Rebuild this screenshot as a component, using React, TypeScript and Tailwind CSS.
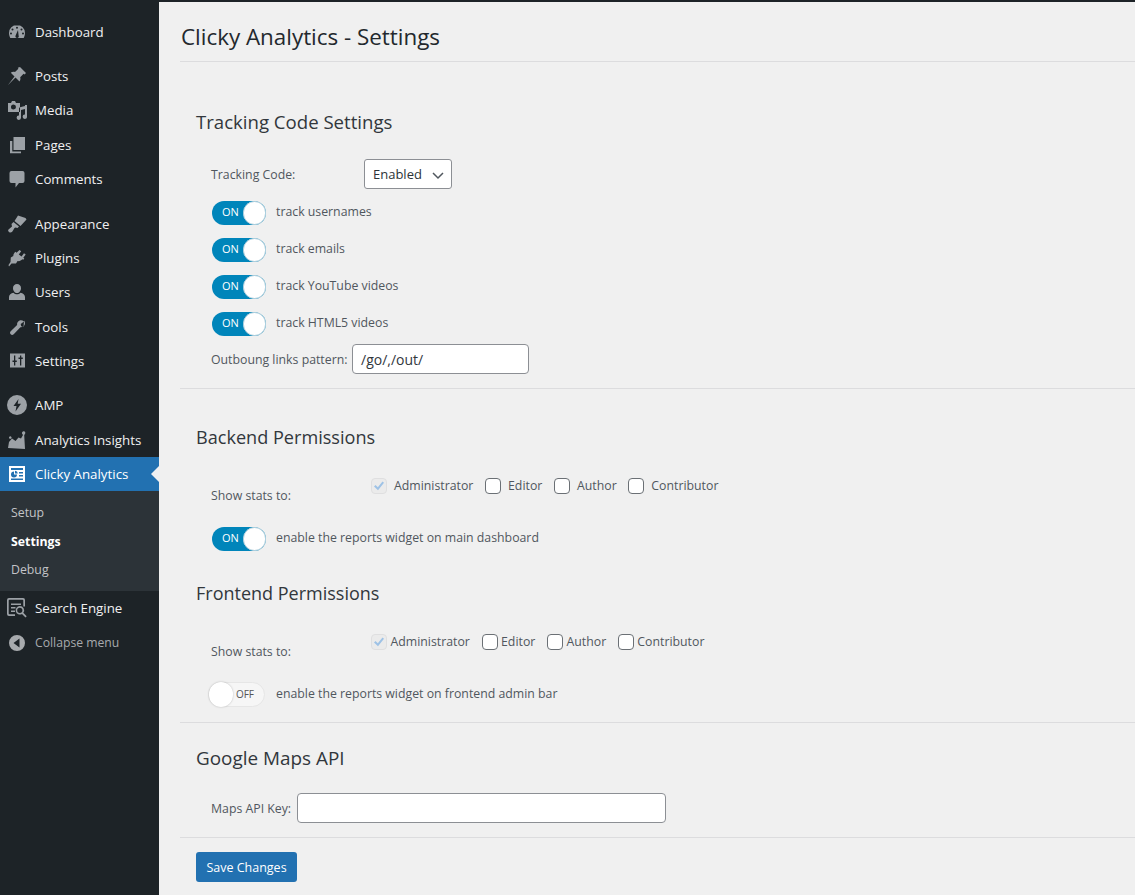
import type { ReactNode } from 'react';

const FONT = "font-['Open_Sans','Noto_Sans',sans-serif]";

const icons: Record<string, ReactNode> = {
    Dashboard: <path fillRule="evenodd" d="M10 3a8 8 0 0 0-8 8c0 1.800.5 3.500 1.300 5h13.400c.8-1.500 1.300-3.200 1.300-5a8 8 0 0 0-8-8zM10 4.700a1 1 0 1 1 0 2 1 1 0 0 1 0-2zM5.500 6.500a1 1 0 1 1 0 2 1 1 0 0 1 0-2zM14.500 6.500a1 1 0 1 1 0 2 1 1 0 0 1 0-2zM4 10.500a1 1 0 1 1 0 2 1 1 0 0 1 0-2zM16 10.500a1 1 0 1 1 0 2 1 1 0 0 1 0-2zM11 8l.6 5.500a1.700 1.700 0 1 1-3 0z" />,
    Posts: <path d="M13 1l6 6-1.400 1.400-1-.6-3.400 3.400c.5 1.700.2 3.200-.7 4.200L8.500 11.500 1 19l6.500-8.500L3.800 6.800c1-.9 2.700-1.200 4.200-.7l3.400-3.400-.6-1z" />,
    Media: <path fillRule="evenodd" d="M1 3h3l1-2h3l1 2h4v9H1zM6.500 4.500a2.500 2.500 0 1 0 0 5 2.500 2.500 0 0 0 0-5zM18 5h2v11.500a2.200 2.200 0 1 1-2-2V9l-4 1v7.500a2.200 2.200 0 1 1-2-2v-8l6-1.500z" />,
    Pages: <path fillRule="evenodd" d="M6.500 2H18v13H6.500zM3 6h2.300v10.500H14v1.700H3z" />,
    Comments: <path d="M4.500 2h11A2 2 0 0 1 17.500 4v8a2 2 0 0 1-2 2H12l-3.500 4.500V14h-4a2 2 0 0 1-2-2V4a2 2 0 0 1 2-2z" />,
    Appearance: <path d="M11 1.500l7.500 2.500 1 1.500-6 6.500-6-5zM6.500 8l5.500 4.500-1.500 1.500-2-.5-1 .5-1.500 2.500c-.5 1-1.500 2-2.500 2S2 18 1.500 17.500 1 16 1.500 15.500L5 12.500l-.5-2.500z" />,
    Plugins: <path d="M12.500 2l1.700 1.200-2.400 3.300 2.800 2 2.400-3.300 1.700 1.200-2.400 3.400 1 .7-1 1.300-1-.5c-1.300 1.500-3 2.200-4.700 1.700L9 15.500H4.500L2 18.500 1.500 17 3.500 14l.3-4.500 2.500-1.500c0-1.700.8-3.300 2.300-4.300l.9 1z" />,
    Users: <path d="M10 2a4 4 0 0 1 4 4.200C14 8.700 12.200 11 10 11S6 8.700 6 6.200A4 4 0 0 1 10 2zM6.500 10.700C7.500 11.800 8.700 12.300 10 12.300s2.500-.5 3.500-1.600c2.500.5 4.500 2 4.500 4.300v3H2v-3c0-2.300 2-3.800 4.500-4.300z" />,
    Tools: <path d="M17 3.500c1 1.200 1.300 2.900.7 4.300-.7 1.700-2.500 2.700-4.300 2.500L6.700 17.200c-.9.900-2.200.9-3 .1-.9-.9-.9-2.200 0-3.100l6.400-6.200c-.3-1.800.8-3.700 2.500-4.400 1.400-.5 3-.2 4.400.9l-3.300 2.500.5 2.300 2.300.6z" />,
    Settings: <path fillRule="evenodd" d="M3 2.500h15v14H3zM7 4.500v5H5.500v1.500H7v3.500h1.300V11h1.500V9.500H8.300v-5zM13 4.500v2h-1.500V8H13v6.500h1.300V8h1.500V6.500h-1.500v-2z" />,
    AMP: <path fillRule="evenodd" d="M10 0a10 10 0 1 1 0 20 10 10 0 0 1 0-20zM11.500 4L6.500 11h3L8.500 16.500l5.500-7.700h-3.300z" />,
    'Analytics Insights': <path d="M1 18l1-6 3-3.500L8.500 11l3-3.500 2.500 1 2-3.500-1-1.500a1.700 1.700 0 1 1 3 .5l-.8 1 .8 14z M2 7.500a1.300 1.300 0 1 1 0 .01z" />,
    'Clicky Analytics': <path fillRule="evenodd" d="M2 2h16v16H2zM4 4v2h12V4zM7 7.500a3 3 0 1 0 3 3H7zM8 6.700v2.800h2.800A3 3 0 0 0 8 6.700zM12 8v1.500h4V8zM12 11v1.500h4V11zM4 14.500V16h12v-1.500z" />,
    'Search Engine': <path fillRule="evenodd" d="M2 0h14a2 2 0 0 1 2 2v6.500h-1.700V2.500a.8.8 0 0 0-.8-.8H2.500a.8.8 0 0 0-.8.8v13a.8.8 0 0 0 .8.8H8V18H2a2 2 0 0 1-2-2V2a2 2 0 0 1 2-2zM4 5.500h10V7H4zM4 9h4.500v1.500H4zM4 12.500h4V14H4zM12.800 8a4.300 4.300 0 0 1 3.500 6.800l3.400 3.500-1.200 1.200-3.500-3.400A4.300 4.300 0 1 1 12.800 8zm0 1.700a2.600 2.600 0 1 0 0 5.200 2.600 2.600 0 0 0 0-5.200z" />,
};

function MenuItem({ label, active = false, gap = false }: { label: string; active?: boolean; gap?: boolean }) {
    return (
        <div className={`relative flex items-center h-[34.33px] ${gap ? 'mt-[10.2px]' : ''} ${active ? 'bg-[#2271b1] text-white' : 'text-[#f0f0f1]'}`}>
            <svg viewBox="0 0 20 20" className={`ml-[7px] w-5 h-5 ${active ? 'fill-white' : 'fill-[#9ca1a6]'}`}>{icons[label]}</svg>
            <span className="ml-2 pt-[2px] text-[13.3px]">{label}</span>
            {active && <span className="absolute right-0 top-[9px] border-y-8 border-r-8 border-y-transparent border-r-[#f0f0f1]" />}
        </div>
    );
}

function Toggle({ on = true }: { on?: boolean }) {
    if (!on) {
        return (
            <div className="relative flex items-center justify-end w-[57px] h-[25px] -ml-[4px] mr-[11px] pr-[10px] rounded-full bg-[#f6f6f6] border border-[#e6e6e6] text-[10px] text-[#555]">
                OFF
                <span className="absolute left-0 -top-px w-[24px] h-[25px] rounded-full bg-white shadow-[0_0_2px_rgba(0,0,0,0.25)]" />
            </div>
        );
    }
    return (
        <div className="relative flex items-center w-[54px] h-[24px] mr-[10px] pl-[10px] rounded-full bg-[#0085ba] text-[11px] text-white">
            ON
            <span className="absolute right-0 top-0 w-[23px] h-[24px] rounded-full bg-white border border-[#b9d3df]" />
        </div>
    );
}

function ToggleRow({ label, on = true }: { label: string; on?: boolean }) {
    return (
        <div className="flex items-center h-[37px] pl-[32px] text-[12.3px] text-[#50575e]">
            <Toggle on={on} />
            <span>{label}</span>
        </div>
    );
}

function Check({ label, checked = false, labelGap }: { label: string; checked?: boolean; labelGap: string }) {
    return (
        <span className="flex items-center mr-[11.7px]">
            <span className={`relative w-4 h-4 rounded-[4px] ${labelGap} ${checked ? 'bg-[#ebebeb] border border-[#dfdfe0]' : 'bg-white border border-[#6b7075]'}`}>
                {checked && (
                    <svg viewBox="0 0 16 16" className="absolute -left-px -top-px w-4 h-4 fill-[#9ec2e6]">
                        <path d="M3 8.500l1.500-1.500 2.300 2.300L11.500 3.500l1.500 1.200-6 7.500z" />
                    </svg>
                )}
            </span>
            {label}
        </span>
    );
}

function Heading({ children, className }: { children: ReactNode; className: string }) {
    return <h2 className={`pl-[16px] leading-[26px] text-[#32373c] ${className}`}>{children}</h2>;
}

function Permissions({ labelGap }: { labelGap: string }) {
    return (
        <div className="flex pl-[31px] h-[45px] text-[12.3px] text-[#50575e]">
            <span className="pt-[12px] w-[160px]">Show stats to:</span>
            <div className="flex h-[20px] items-center mt-[1px]">
                <Check label="Administrator" checked labelGap={labelGap} />
                <Check label="Editor" labelGap={labelGap} />
                <Check label="Author" labelGap={labelGap} />
                <Check label="Contributor" labelGap={labelGap} />
            </div>
        </div>
    );
}

export default function App() {
    return (
        <div className={`flex w-[1135px] h-[895px] overflow-hidden bg-[#f0f0f0] ${FONT}`}>
            <aside className="w-[159px] shrink-0 bg-[#1d2327] pt-[14.4px]">
                <MenuItem label="Dashboard" />
                <MenuItem label="Posts" gap />
                <MenuItem label="Media" />
                <MenuItem label="Pages" />
                <MenuItem label="Comments" />
                <MenuItem label="Appearance" gap />
                <MenuItem label="Plugins" />
                <MenuItem label="Users" />
                <MenuItem label="Tools" />
                <MenuItem label="Settings" />
                <MenuItem label="AMP" gap />
                <MenuItem label="Analytics Insights" />
                <MenuItem label="Clicky Analytics" active />
                <div className="flex flex-col justify-center h-[100px] pl-[11px] pt-[2px] bg-[#2c3338] text-[12.3px] text-[#c3c4c7] leading-[28.5px]">
                    <span>Setup</span>
                    <span className="font-bold text-white">Settings</span>
                    <span>Debug</span>
                </div>
                <MenuItem label="Search Engine" />
                <div className="flex items-center h-[34px] text-[12.2px] text-[#a7aaad]">
                    <svg viewBox="0 0 20 20" className="ml-[7px] w-5 h-5 fill-[#a7aaad]">
                        <path d="M10 2a8 8 0 1 1 0 16 8 8 0 0 1 0-16zM12.500 5.500L6.500 10l6 4.500z" fillRule="evenodd" />
                    </svg>
                    <span className="ml-2 pt-[2px]">Collapse menu</span>
                </div>
            </aside>
            <main className="flex-1 min-w-0 pl-[21px]">
                <div className="h-[2px] -ml-[21px] bg-[#1d2327]" />
                <h1 className="h-[60px] pt-[19px] pl-px text-[22.4px] leading-[32px] text-[#23282d] border-b border-[#dcdcde]">Clicky Analytics - Settings</h1>
                <Heading className="mt-[47px] text-[18.6px]">Tracking Code Settings</Heading>
                <div className="flex items-center h-[30px] mt-[24px] pl-[31px] text-[12.3px] text-[#50575e]">
                    <span className="w-[153px] pt-[3px]">Tracking Code:</span>
                    <div className="flex items-center justify-between w-[88px] h-[30px] pl-[8px] pr-[7px] pt-px bg-white border border-[#8c8f94] rounded-[3px] text-[13px] text-[#2c3338]">
                        Enabled
                        <svg viewBox="0 0 12 12" className="w-3 h-3 fill-none stroke-[#50575e] stroke-[1.5]"><path d="M1 4l5 5 5-5" /></svg>
                    </div>
                </div>
                <div className="mt-[5px]">
                    <ToggleRow label="track usernames" />
                    <ToggleRow label="track emails" />
                    <ToggleRow label="track YouTube videos" />
                    <ToggleRow label="track HTML5 videos" />
                </div>
                <div className="flex items-center h-[30px] mt-[2px] pl-[31px] text-[12.3px] text-[#50575e]">
                    <span className="w-[141px] pt-[2px]">Outboung links pattern:</span>
                    <div className="flex items-center w-[177px] h-[30px] pl-[8px] bg-white border border-[#8c8f94] rounded-[4px] text-[14px] text-[#32373c]">/go/,/out/</div>
                </div>
                <div className="h-px mt-[14px] bg-[#dcdcde]" />
                <Heading className="mt-[35px] text-[18.1px]">Backend Permissions</Heading>
                <div className="mt-[25px]"><Permissions labelGap="mr-[7px]" /></div>
                <ToggleRow label="enable the reports widget on main dashboard" />
                <Heading className="mt-[23px] text-[18px]">Frontend Permissions</Heading>
                <div className="mt-[25px]"><Permissions labelGap="mr-[3.5px]" /></div>
                <ToggleRow label="enable the reports widget on frontend admin bar" on={false} />
                <div className="h-px mt-[9px] bg-[#dcdcde]" />
                <Heading className="mt-[22px] text-[18.9px]">Google Maps API</Heading>
                <div className="flex items-center h-[30px] mt-[22px] pl-[31px] text-[12.3px] text-[#50575e]">
                    <span className="w-[86px] pt-[2px]">Maps API Key:</span>
                    <div className="w-[369px] h-[30px] bg-white border border-[#8c8f94] rounded-[4px]" />
                </div>
                <div className="h-px mt-[14px] bg-[#dcdcde]" />
                <button className="ml-[16px] mt-[14px] w-[101px] h-[30px] pt-[2px] bg-[#2271b1] rounded-[3px] text-[12.5px] text-white">Save Changes</button>
            </main>
        </div>
    );
}
